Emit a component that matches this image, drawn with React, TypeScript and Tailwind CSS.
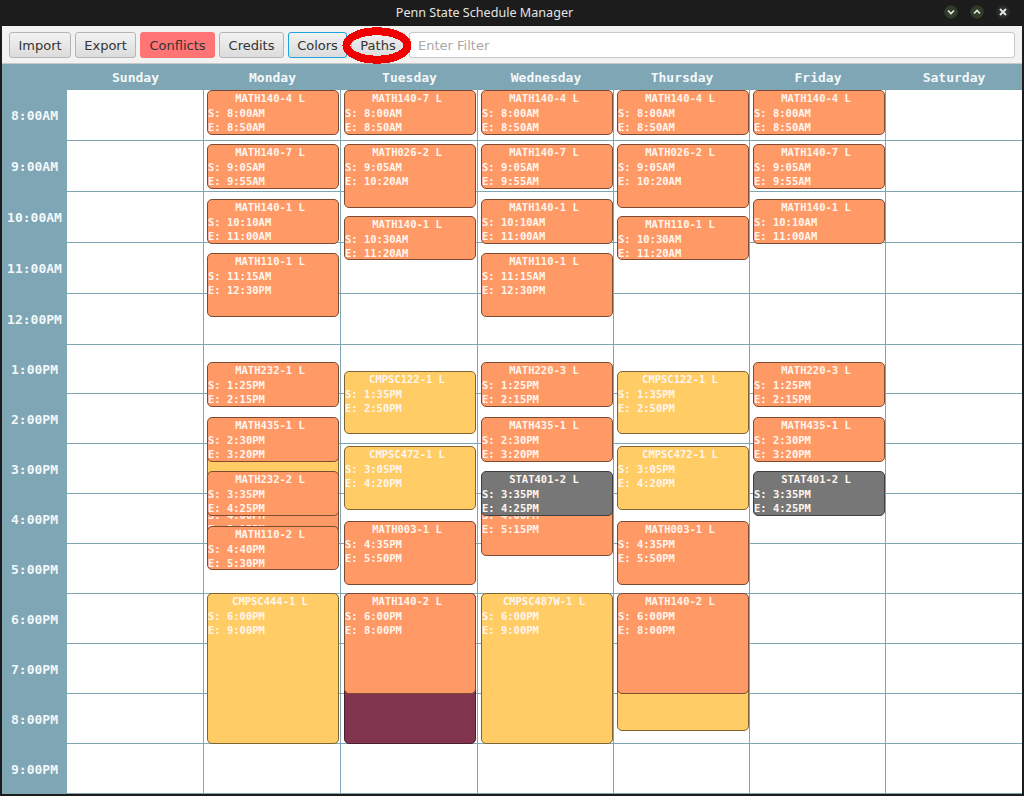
const rows = [51, 51, 51, 51, 51, 49, 50, 50, 50, 50, 50, 50, 50, 50];
const times = ["8:00AM", "9:00AM", "10:00AM", "11:00AM", "12:00PM", "1:00PM", "2:00PM", "3:00PM", "4:00PM", "5:00PM", "6:00PM", "7:00PM", "8:00PM", "9:00PM"];

type Kind = "orange" | "yellow" | "gray" | "maroon";
type Block = { name: string; s: string; e: string; y: number; h: number; kind: Kind };

const kinds: Record<Kind, string> = {
  orange: "bg-[#ff9966] border-[#7d4b32]",
  yellow: "bg-[#ffcc66] border-[#7d6432]",
  gray: "bg-[#777777] border-[#3f3f3f]",
  maroon: "bg-[#80344d] border-[#4a1e2c]",
};

const b = (name: string, s: string, e: string, y: number, h: number, kind: Kind = "orange"): Block => ({ name, s, e, y, h, kind });

const days: { name: string; blocks: Block[] }[] = [
  { name: "Sunday", blocks: [] },
  {
    name: "Monday",
    blocks: [
      b("MATH140-4 L", "8:00AM", "8:50AM", 90, 45),
      b("MATH140-7 L", "9:05AM", "9:55AM", 144, 45),
      b("MATH140-1 L", "10:10AM", "11:00AM", 199, 45),
      b("MATH110-1 L", "11:15AM", "12:30PM", 253, 64),
      b("MATH232-1 L", "1:25PM", "2:15PM", 362, 45),
      b("", "", "", 446, 64, "yellow"),
      b("MATH435-1 L", "2:30PM", "3:20PM", 417, 45),
      b("", "4:00PM", "5:15PM", 492, 64),
      b("MATH232-2 L", "3:35PM", "4:25PM", 471, 45),
      b("MATH110-2 L", "4:40PM", "5:30PM", 526, 44),
      b("CMPSC444-1 L", "6:00PM", "9:00PM", 593, 151, "yellow"),
    ],
  },
  {
    name: "Tuesday",
    blocks: [
      b("MATH140-7 L", "8:00AM", "8:50AM", 90, 45),
      b("MATH026-2 L", "9:05AM", "10:20AM", 144, 64),
      b("MATH140-1 L", "10:30AM", "11:20AM", 216, 44),
      b("CMPSC122-1 L", "1:35PM", "2:50PM", 371, 63, "yellow"),
      b("CMPSC472-1 L", "3:05PM", "4:20PM", 446, 64, "yellow"),
      b("MATH003-1 L", "4:35PM", "5:50PM", 521, 64),
      b("", "", "", 593, 151, "maroon"),
      b("MATH140-2 L", "6:00PM", "8:00PM", 593, 101),
    ],
  },
  {
    name: "Wednesday",
    blocks: [
      b("MATH140-4 L", "8:00AM", "8:50AM", 90, 45),
      b("MATH140-7 L", "9:05AM", "9:55AM", 144, 45),
      b("MATH140-1 L", "10:10AM", "11:00AM", 199, 45),
      b("MATH110-1 L", "11:15AM", "12:30PM", 253, 64),
      b("MATH220-3 L", "1:25PM", "2:15PM", 362, 45),
      b("MATH435-1 L", "2:30PM", "3:20PM", 417, 45),
      b("", "4:00PM", "5:15PM", 492, 64),
      b("STAT401-2 L", "3:35PM", "4:25PM", 471, 45, "gray"),
      b("CMPSC487W-1 L", "6:00PM", "9:00PM", 593, 151, "yellow"),
    ],
  },
  {
    name: "Thursday",
    blocks: [
      b("MATH140-4 L", "8:00AM", "8:50AM", 90, 45),
      b("MATH026-2 L", "9:05AM", "10:20AM", 144, 64),
      b("MATH110-1 L", "10:30AM", "11:20AM", 216, 44),
      b("CMPSC122-1 L", "1:35PM", "2:50PM", 371, 63, "yellow"),
      b("CMPSC472-1 L", "3:05PM", "4:20PM", 446, 64, "yellow"),
      b("MATH003-1 L", "4:35PM", "5:50PM", 521, 64),
      b("", "", "", 650, 81, "yellow"),
      b("MATH140-2 L", "6:00PM", "8:00PM", 593, 101),
    ],
  },
  {
    name: "Friday",
    blocks: [
      b("MATH140-4 L", "8:00AM", "8:50AM", 90, 45),
      b("MATH140-7 L", "9:05AM", "9:55AM", 144, 45),
      b("MATH140-1 L", "10:10AM", "11:00AM", 199, 45),
      b("MATH220-3 L", "1:25PM", "2:15PM", 362, 45),
      b("MATH435-1 L", "2:30PM", "3:20PM", 417, 45),
      b("STAT401-2 L", "3:35PM", "4:25PM", 471, 45, "gray"),
    ],
  },
  { name: "Saturday", blocks: [] },
];

const colWidths = [137, 137, 137, 136, 136, 136, 136];

const ToolButton = ({ label, className }: { label: string; className: string }) => (
  <button className={`h-[26px] rounded-[3px] border pt-[1px] text-[13px] text-[#333] ${className}`}>{label}</button>
);

const WindowButton = ({ className, children }: { className: string; children: React.ReactNode }) => (
  <div className={`flex h-[14px] w-[14px] items-center justify-center rounded-full border ${className}`}>
    {children}
  </div>
);

const App = () => {
  return (
    <div className="relative flex h-[796px] w-[1024px] flex-col overflow-hidden bg-[#1c1c1c] font-['DejaVu_Sans',sans-serif]">
      <div className="relative flex h-[26px] shrink-0 items-center justify-center rounded-t-[4px] bg-[#1c1c1c] pr-[55px] font-['Noto_Sans',sans-serif] text-[12.6px] text-[#e4e4e2]">
        Penn State Schedule Manager
        <div className="absolute right-[14px] top-[5px] flex gap-[12px]">
          <WindowButton className="border-[#2a3324] bg-[#313d2b]">
            <svg width="8" height="8" viewBox="0 0 8 8" fill="none" stroke="#e4e8e0" strokeWidth="1.6"><path d="M1 2.5 4 5.5 7 2.5" /></svg>
          </WindowButton>
          <WindowButton className="border-[#2a3324] bg-[#313d2b]">
            <svg width="8" height="8" viewBox="0 0 8 8" fill="none" stroke="#e4e8e0" strokeWidth="1.6"><path d="M1 5.5 4 2.5 7 5.5" /></svg>
          </WindowButton>
          <WindowButton className="border-[#262626] bg-[#2a2c2a]">
            <svg width="8" height="8" viewBox="0 0 8 8" fill="none" stroke="#dfe3e3" strokeWidth="2"><path d="M1 1 7 7M7 1 1 7" /></svg>
          </WindowButton>
        </div>
      </div>

      <div className="mx-[2px] flex h-[768px] flex-col bg-white">
        <div className="flex h-[38px] shrink-0 items-center gap-[4px] border-b border-[#c8c8c8] bg-[#f2f2f2] pl-[7px] pr-[7px] pt-[1px]">
          <ToolButton label="Import" className="w-[62px] border-[#b5b5b5] bg-gradient-to-b from-[#f2f2f2] to-[#dcdcdc]" />
          <ToolButton label="Export" className="w-[61px] border-[#b5b5b5] bg-gradient-to-b from-[#f2f2f2] to-[#dcdcdc]" />
          <ToolButton label="Conflicts" className="w-[75px] border-[#ff7474] bg-[#ff7474]" />
          <ToolButton label="Credits" className="w-[65px] border-[#b5b5b5] bg-gradient-to-b from-[#f2f2f2] to-[#dcdcdc]" />
          <ToolButton label="Colors" className="w-[59px] border-[#1fa3dc] bg-gradient-to-b from-[#f2f2f2] to-[#dcdcdc]" />
          <ToolButton label="Paths" className="w-[54px] border-[#c4c4c4] bg-gradient-to-b from-[#f0f0f0] to-[#dcdcdc]" />
          <input
            placeholder="Enter Filter"
            className="h-[26px] w-[606px] rounded-[3px] border border-[#c8c8c8] bg-white pl-[8px] text-[13px] outline-none placeholder:text-[#a8a8a8]"
          />
        </div>

        <div className="flex h-[26px] shrink-0 bg-[#7ea6b4] pt-[2px] font-['DejaVu_Sans_Mono',monospace] text-[13px] font-bold text-[#f4f8fa]">
          <div className="w-[65px] shrink-0" />
          {days.map((day, i) => (
            <div key={day.name} className="flex items-center justify-center" style={{ width: colWidths[i] }}>
              {day.name}
            </div>
          ))}
        </div>

        <div className="flex flex-1 bg-white">
          <div className="w-[65px] shrink-0 bg-[#7ea6b4] font-['DejaVu_Sans_Mono',monospace] text-[13px] font-bold text-[#f4f8fa]">
            {times.map((t, i) => (
              <div key={t} className="flex items-center justify-center pt-[1px]" style={{ height: rows[i] }}>
                {t}
              </div>
            ))}
          </div>
          {days.map((day, i) => (
            <div key={day.name} className="relative shrink-0 border-r border-[#7ea6b4] last:border-r-0" style={{ width: colWidths[i] }}>
              {rows.map((h, r) => (
                <div key={r} className="border-b border-[#7ea6b4]" style={{ height: h }} />
              ))}
              {day.blocks.map((block) => (
                <div
                  key={block.name + block.y}
                  className={`absolute left-[3px] w-[132px] overflow-hidden rounded-[5px] border font-['DejaVu_Sans_Mono',monospace] text-[10.5px] font-bold leading-[14px] text-[#fff6ee] ${kinds[block.kind]}`}
                  style={{ top: block.y - 90, height: block.h }}
                >
                  <div className="h-[15px] pr-[6px] text-center">{block.name}</div>
                  {block.s && (
                    <>
                      <div>S: {block.s}</div>
                      <div>E: {block.e}</div>
                    </>
                  )}
                </div>
              ))}
            </div>
          ))}
        </div>
      </div>

      <svg className="absolute left-[341px] top-[25px]" width="74" height="40" viewBox="0 0 74 40" fill="none" shapeRendering="crispEdges">
        <ellipse cx="36" cy="20.5" rx="30.5" ry="14.2" stroke="#f00000" strokeWidth="8" />
      </svg>
    </div>
  );
};

export default App;
